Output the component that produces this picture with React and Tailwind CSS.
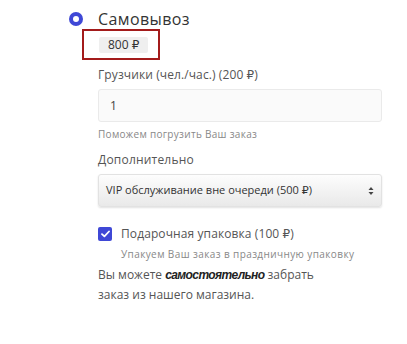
export default function App() {
  const font = { fontFamily: '"Open Sans", "DejaVu Sans", sans-serif' };
  return (
    <div className="w-[407px] h-[344px] bg-white text-[#333]" style={font}>
      <div className="flex items-center pl-[69px] pt-[11px]">
        <span className="w-[14px] h-[14px] rounded-full bg-[#3f48d6] flex items-center justify-center">
          <span className="w-[6px] h-[6px] rounded-full bg-white" />
        </span>
        <span className="ml-[15px] text-[16px] leading-[16px] text-[#333] tracking-[0.4px]">Самовывоз</span>
      </div>
      <div className="ml-[82px] mt-[2px] w-[78px] h-[31px] border-2 border-[#a31b1b] flex items-center pl-[15px]">
        <span className="bg-[#efefef] rounded-[2px] px-[9px] h-[16px] flex items-center text-[12px] text-[#333]">800 ₽</span>
      </div>
      <div className="ml-[98px] w-[284px]">
        <div className="mt-[7px] text-[12px] leading-[16px] text-[#555] tracking-[0.1px]">Грузчики (чел./час.) (200 ₽)</div>
        <div className="mt-[6px] h-[33px] bg-[#fafafa] border border-[#eaeaea] rounded-[3px] flex items-center pl-[11px] text-[12px] text-[#444]">1</div>
        <div className="mt-[5px] text-[10px] leading-[14px] text-[#888] tracking-[0.3px]">Поможем погрузить Ваш заказ</div>
        <div className="mt-[11px] text-[12px] leading-[16px] text-[#555] tracking-[0.2px]">Дополнительно</div>
        <div className="mt-[6px] h-[33px] rounded-[3px] border border-[#e2e2e2] bg-gradient-to-b from-[#fdfdfd] to-[#e9e9e9] shadow-[0_1px_2px_rgba(0,0,0,0.12)] flex items-center justify-between pl-[7px] pr-[7px] text-[11px] text-[#333]">
          <span>VIP обслуживание вне очереди (500 ₽)</span>
          <svg width="6" height="10" viewBox="0 0 6 10">
            <path d="M3 1 L5.5 4 H0.5 Z" fill="#444" />
            <path d="M3 9 L5.5 6 H0.5 Z" fill="#444" />
          </svg>
        </div>
        <div className="mt-[19px] flex items-center">
          <span className="w-[14px] h-[14px] rounded-[2px] bg-[#3f48d6] flex items-center justify-center">
            <svg width="9" height="8" viewBox="0 0 9 8">
              <path d="M1 4.2 L3.4 6.4 L8 1.5" stroke="white" strokeWidth="1.8" fill="none" strokeLinecap="round" strokeLinejoin="round" />
            </svg>
          </span>
          <span className="ml-[9px] text-[12px] leading-[16px] text-[#555] tracking-[0.1px]">Подарочная упаковка (100 ₽)</span>
        </div>
        <div className="ml-[23px] mt-[5px] text-[10px] leading-[14px] text-[#888] tracking-[0.4px]">Упакуем Ваш заказ в праздничную упаковку</div>
        <div className="mt-[4px] text-[12px] leading-[19px] text-[#555]">
          Вы можете <b className="italic font-bold text-[#222] tracking-[-0.6px]" style={{ fontFamily: '"Liberation Sans", sans-serif' }}>самостоятельно</b> забрать<br />заказ из нашего магазина.
        </div>
      </div>
    </div>
  );
}
